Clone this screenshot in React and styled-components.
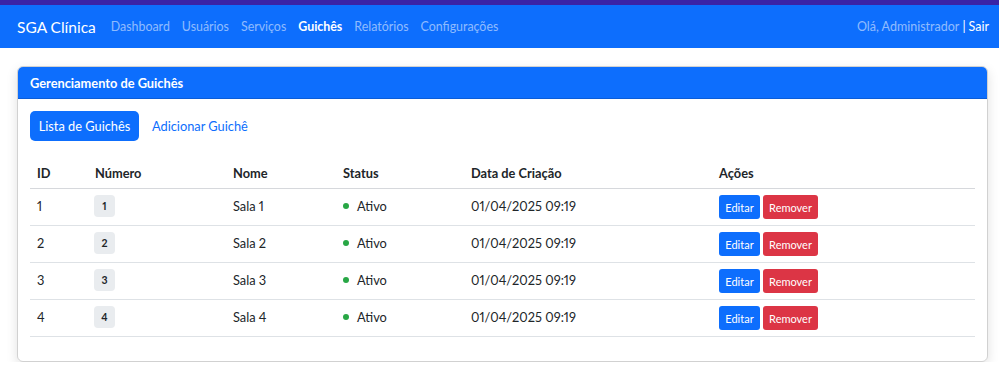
import React from "react";
import styled, { createGlobalStyle } from "styled-components";

const GlobalStyle = createGlobalStyle`
  body {
    margin: 0;
    font-family: "Segoe UI", Lato, "Noto Sans", Arial, sans-serif;
    font-size: 12.8px;
    font-variant-numeric: proportional-nums;
    color: #212529;
    background: #fff;
  }
`;

const TopStripe = styled.div`
  height: 5px;
  background: #3a23a6;
`;

const Navbar = styled.nav`
  height: 43px;
  background: #0d6efd;
  display: flex;
  align-items: center;
  padding: 0 10px 0 17px;
`;

const Brand = styled.span`
  color: #fff;
  font-size: 15.5px;
  margin-right: 9px;
`;

const NavLinks = styled.div`
  display: flex;
  flex: 1;
`;

const NavLink = styled.a`
  padding: 0 6px;
  font-size: 12.4px;
  color: ${(p) => (p.$active ? "#fff" : "rgba(255,255,255,0.55)")};
  font-weight: ${(p) => (p.$active ? 700 : 400)};
  text-decoration: none;
`;

const UserArea = styled.div`
  font-size: 12.5px;
  color: rgba(255, 255, 255, 0.55);
`;

const Sair = styled.span`
  color: #fff;
`;

const Pipe = styled.span`
  color: #fff;
  margin: 0 3px;
`;

const Page = styled.div`
  padding: 18px 11px 0 17px;
`;

const Card = styled.div`
  border: 1px solid rgba(0, 0, 0, 0.18);
  border-radius: 6px;
  box-shadow: 0 4px 12px rgba(0, 0, 0, 0.12);
  overflow: hidden;
`;

const CardHeader = styled.div`
  background: #0d6efd;
  color: #fff;
  font-weight: 700;
  height: 31px;
  display: flex;
  align-items: center;
  padding: 0 12px;
  border-bottom: 1px solid rgba(0, 0, 0, 0.15);
`;

const CardBody = styled.div`
  padding: 12px 12px 24px 12px;
`;

const Tabs = styled.div`
  display: flex;
  align-items: center;
  gap: 13px;
  margin-bottom: 19px;
`;

const TabButton = styled.button`
  background: #0d6efd;
  color: #fff;
  border: none;
  border-radius: 5px;
  height: 30px;
  width: 109px;
  padding: 0;
  font-family: inherit;
  font-size: 12.8px;
`;

const TabLink = styled.a`
  color: #0d6efd;
  font-size: 12.8px;
  text-decoration: none;
`;

const Table = styled.table`
  width: 100%;
  border-collapse: collapse;
  table-layout: fixed;
`;

const Th = styled.th`
  text-align: left;
  font-weight: 700;
  padding: 0 7px 2px;
  height: 26px;
  border-bottom: 1px solid #d6d8dc;
  width: ${(p) => p.$w || "auto"};
`;

const Td = styled.td`
  padding: 0 7px 3px;
  height: 33px;
  border-bottom: 1px solid #dee2e6;
  vertical-align: middle;
  color: #212529;
`;

const Badge = styled.span`
  display: inline-flex;
  align-items: center;
  justify-content: center;
  width: 21px;
  height: 22px;
  margin-left: -1px;
  margin-top: 1px;
  background: #e9ecef;
  border-radius: 4px;
  font-weight: 700;
  font-size: 10.5px;
`;

const Status = styled.div`
  display: flex;
  align-items: center;
  gap: 8px;
`;

const Dot = styled.span`
  width: 6px;
  height: 6px;
  border-radius: 50%;
  background: #28a745;
  margin-top: 1px;
`;

const Actions = styled.div`
  display: flex;
  gap: 3px;
  padding-top: 3px;
`;

const SmallButton = styled.button`
  background: ${(p) => (p.$danger ? "#dc3545" : "#0d6efd")};
  color: #fff;
  border: none;
  border-radius: 3px;
  height: 24px;
  width: ${(p) => (p.$danger ? "55px" : "41px")};
  padding: 0;
  font-family: inherit;
  font-size: 11px;
`;

const guiches = [1, 2, 3, 4].map((n) => ({
  id: n,
  numero: n,
  nome: `Sala ${n}`,
  data: "01/04/2025 09:19",
}));

export default function App() {
  return (
    <>
      <GlobalStyle />
      <TopStripe />
      <Navbar>
        <Brand>SGA Clínica</Brand>
        <NavLinks>
          <NavLink>Dashboard</NavLink>
          <NavLink>Usuários</NavLink>
          <NavLink>Serviços</NavLink>
          <NavLink $active>Guichês</NavLink>
          <NavLink>Relatórios</NavLink>
          <NavLink>Configurações</NavLink>
        </NavLinks>
        <UserArea>
          Olá, Administrador<Pipe>|</Pipe><Sair>Sair</Sair>
        </UserArea>
      </Navbar>
      <Page>
        <Card>
          <CardHeader>Gerenciamento de Guichês</CardHeader>
          <CardBody>
            <Tabs>
              <TabButton>Lista de Guichês</TabButton>
              <TabLink>Adicionar Guichê</TabLink>
            </Tabs>
            <Table>
              <thead>
                <tr>
                  <Th $w="44px">ID</Th>
                  <Th $w="124px">Número</Th>
                  <Th $w="96px">Nome</Th>
                  <Th $w="114px">Status</Th>
                  <Th $w="234px">Data de Criação</Th>
                  <Th>Ações</Th>
                </tr>
              </thead>
              <tbody>
                {guiches.map((g) => (
                  <tr key={g.id}>
                    <Td>{g.id}</Td>
                    <Td>
                      <Badge>{g.numero}</Badge>
                    </Td>
                    <Td>{g.nome}</Td>
                    <Td>
                      <Status>
                        <Dot />
                        Ativo
                      </Status>
                    </Td>
                    <Td>{g.data}</Td>
                    <Td>
                      <Actions>
                        <SmallButton>Editar</SmallButton>
                        <SmallButton $danger>Remover</SmallButton>
                      </Actions>
                    </Td>
                  </tr>
                ))}
              </tbody>
            </Table>
          </CardBody>
        </Card>
      </Page>
    </>
  );
}
